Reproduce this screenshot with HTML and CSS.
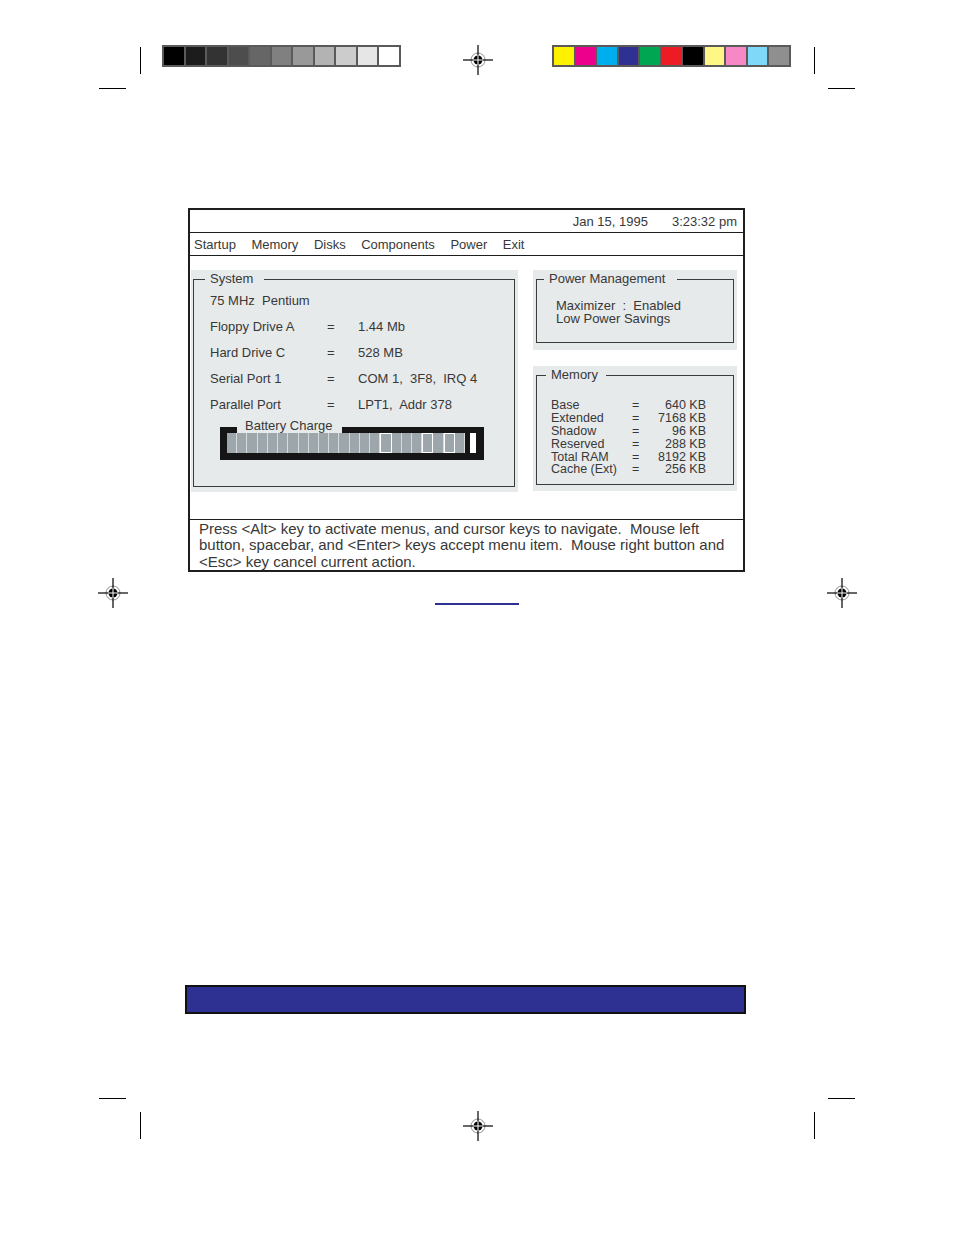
FILE: index.html
```html
<!DOCTYPE html>
<html>
<head>
<meta charset="utf-8">
<link rel="stylesheet" href="styles.css">
</head>
<body>
<div class="page">
  <div class="proofbar">
    <div class="strip">
      <span class="sw g0"></span><span class="sw g1"></span><span class="sw g2"></span><span class="sw g3"></span><span class="sw g4"></span><span class="sw g5"></span><span class="sw g6"></span><span class="sw g7"></span><span class="sw g8"></span><span class="sw g9"></span><span class="sw g10"></span>
    </div>
    <div class="strip">
      <span class="sw c0"></span><span class="sw c1"></span><span class="sw c2"></span><span class="sw c3"></span><span class="sw c4"></span><span class="sw c5"></span><span class="sw c6"></span><span class="sw c7"></span><span class="sw c8"></span><span class="sw c9"></span><span class="sw c10"></span>
    </div>
  </div>

  <div class="screen">
    <div class="titlebar"><span>Jan 15, 1995</span><span>3:23:32 pm</span></div>
    <div class="menubar">
      <span>Startup</span><span>Memory</span><span>Disks</span><span>Components</span><span>Power</span><span>Exit</span>
    </div>
    <div class="content">
      <div class="panel sys-panel">
        <div class="box sys-box">
          <span class="legend sys-legend">System</span>
          <div class="sys-rows">
            <div class="sys-full">75 MHz&nbsp; Pentium</div>
            <div>Floppy Drive A</div><div>=</div><div>1.44 Mb</div>
            <div>Hard Drive C</div><div>=</div><div>528 MB</div>
            <div>Serial Port 1</div><div>=</div><div>COM 1,&nbsp; 3F8,&nbsp; IRQ 4</div>
            <div>Parallel Port</div><div>=</div><div>LPT1,&nbsp; Addr 378</div>
          </div>
          <div class="battery">
            <span class="batt-label">Battery Charge</span>
            <div class="segs">
              <i class="seg"></i><i class="seg"></i><i class="seg"></i><i class="seg"></i><i class="seg"></i><i class="seg"></i><i class="seg"></i><i class="seg"></i><i class="seg"></i><i class="seg"></i><i class="seg"></i><i class="seg"></i><i class="seg"></i><i class="seg"></i><i class="seg"></i><i class="seg hl"></i><i class="seg"></i><i class="seg"></i><i class="seg"></i><i class="seg hl"></i><i class="seg"></i><i class="seg hl"></i><i class="seg"></i>
            </div>
            <i class="batt-tip"></i>
          </div>
        </div>
      </div>
      <div class="rightcol">
        <div class="panel pm-panel">
          <div class="box pm-box">
            <span class="legend pm-legend">Power Management</span>
            <div class="pm-lines">
              <div>Maximizer&nbsp; :&nbsp; Enabled</div>
              <div>Low Power Savings</div>
            </div>
          </div>
        </div>
        <div class="panel mem-panel">
          <div class="box mem-box">
            <span class="legend mem-legend">Memory</span>
            <div class="mem-rows">
              <div>Base</div><div>=</div><div class="num">640 KB</div>
              <div>Extended</div><div>=</div><div class="num">7168 KB</div>
              <div>Shadow</div><div>=</div><div class="num">96 KB</div>
              <div>Reserved</div><div>=</div><div class="num">288 KB</div>
              <div>Total RAM</div><div>=</div><div class="num">8192 KB</div>
              <div>Cache (Ext)</div><div>=</div><div class="num">256 KB</div>
            </div>
          </div>
        </div>
      </div>
    </div>
    <div class="footer">Press &lt;Alt&gt; key to activate menus, and cursor keys to navigate.&nbsp; Mouse left<br>button, spacebar, and &lt;Enter&gt; keys accept menu item.&nbsp; Mouse right button and<br>&lt;Esc&gt; key cancel current action.</div>
  </div>

  <div class="link-rule"></div>
  <div class="bluebar"></div>

  <!-- printer's crop marks -->
  <i class="crop v tl"></i><i class="crop h tlh"></i>
  <i class="crop v tr"></i><i class="crop h trh"></i>
  <i class="crop h blh"></i><i class="crop v bl"></i>
  <i class="crop h brh"></i><i class="crop v br"></i>

  <!-- registration marks -->
  <svg class="reg reg-top" viewBox="0 0 30 30" width="30" height="30"><circle cx="15" cy="15" r="7" fill="#fff" stroke="#777" stroke-width="0.8"/><line x1="0" y1="15" x2="30" y2="15" stroke="#000" stroke-width="1.2"/><line x1="15" y1="0" x2="15" y2="30" stroke="#000" stroke-width="1.2"/><circle cx="15" cy="15" r="4.5" fill="#000"/><line x1="10" y1="15" x2="20" y2="15" stroke="#fff" stroke-width="1"/><line x1="15" y1="10" x2="15" y2="20" stroke="#fff" stroke-width="1"/></svg>
  <svg class="reg reg-left" viewBox="0 0 30 30" width="30" height="30"><circle cx="15" cy="15" r="7" fill="#fff" stroke="#777" stroke-width="0.8"/><line x1="0" y1="15" x2="30" y2="15" stroke="#000" stroke-width="1.2"/><line x1="15" y1="0" x2="15" y2="30" stroke="#000" stroke-width="1.2"/><circle cx="15" cy="15" r="4.5" fill="#000"/><line x1="10" y1="15" x2="20" y2="15" stroke="#fff" stroke-width="1"/><line x1="15" y1="10" x2="15" y2="20" stroke="#fff" stroke-width="1"/></svg>
  <svg class="reg reg-right" viewBox="0 0 30 30" width="30" height="30"><circle cx="15" cy="15" r="7" fill="#fff" stroke="#777" stroke-width="0.8"/><line x1="0" y1="15" x2="30" y2="15" stroke="#000" stroke-width="1.2"/><line x1="15" y1="0" x2="15" y2="30" stroke="#000" stroke-width="1.2"/><circle cx="15" cy="15" r="4.5" fill="#000"/><line x1="10" y1="15" x2="20" y2="15" stroke="#fff" stroke-width="1"/><line x1="15" y1="10" x2="15" y2="20" stroke="#fff" stroke-width="1"/></svg>
  <svg class="reg reg-bottom" viewBox="0 0 30 30" width="30" height="30"><circle cx="15" cy="15" r="7" fill="#fff" stroke="#777" stroke-width="0.8"/><line x1="0" y1="15" x2="30" y2="15" stroke="#000" stroke-width="1.2"/><line x1="15" y1="0" x2="15" y2="30" stroke="#000" stroke-width="1.2"/><circle cx="15" cy="15" r="4.5" fill="#000"/><line x1="10" y1="15" x2="20" y2="15" stroke="#fff" stroke-width="1"/><line x1="15" y1="10" x2="15" y2="20" stroke="#fff" stroke-width="1"/></svg>
</div>
</body>
</html>
```
FILE: styles.css
```css
html, body {
  margin: 0;
  padding: 0;
  background: #fff;
}
.page {
  position: relative;
  width: 954px;
  height: 1235px;
  overflow: hidden;
  font-family: "Liberation Sans", Arial, sans-serif;
  color: #383838;
}

/* colour control strips */
.proofbar {
  display: flex;
  gap: 151px;
  padding: 45px 0 0 162px;
  height: 22px;
}
.strip {
  display: flex;
  gap: 2px;
  padding: 2px;
  width: 239px;
  height: 22px;
  box-sizing: border-box;
  background: #5a5a5a;
}
.sw { flex: 1; display: block; }
.g0 { background: #000; }
.g1 { background: #1c1c1c; }
.g2 { background: #333; }
.g3 { background: #4d4d4d; }
.g4 { background: #666; }
.g5 { background: #808080; }
.g6 { background: #999; }
.g7 { background: #b3b3b3; }
.g8 { background: #ccc; }
.g9 { background: #e6e6e6; }
.g10 { background: #fff; }
.c0 { background: #fff200; }
.c1 { background: #ec008c; }
.c2 { background: #00aeef; }
.c3 { background: #2e3192; }
.c4 { background: #00a651; }
.c5 { background: #ed1c24; }
.c6 { background: #000; }
.c7 { background: #fff685; }
.c8 { background: #f588c5; }
.c9 { background: #80d8f8; }
.c10 { background: #8f8f8f; }

/* the screen */
.screen {
  margin: 141px 0 0 188px;
  width: 557px;
  box-sizing: border-box;
  border: 2px solid #1e1e1e;
  font-size: 13px;
}
.titlebar {
  display: flex;
  justify-content: flex-end;
  align-items: center;
  gap: 24px;
  height: 22px;
  padding-right: 6px;
  border-bottom: 1px solid #1e1e1e;
}
.menubar {
  display: flex;
  align-items: center;
  gap: 15.5px;
  height: 22px;
  padding-left: 4px;
  border-bottom: 1px solid #1e1e1e;
}
.content {
  display: flex;
  gap: 15px;
  height: 264px;
  box-sizing: border-box;
  padding: 14px 0 0 1px;
  border-bottom: 1px solid #1e1e1e;
}
.panel {
  background: #e7eaeb;
  display: flow-root;
}
.box {
  position: relative;
  box-sizing: border-box;
  border: 1px solid #3c3c3c;
}
.legend {
  position: absolute;
  top: -9px;
  height: 16px;
  line-height: 16px;
  background: #e7eaeb;
  white-space: nowrap;
}

.sys-panel {
  width: 327px;
  height: 222px;
}
.sys-box {
  margin: 9px 3px 0 2px;
  height: 208px;
  padding: 7px 0 0 16px;
}
.sys-legend {
  left: 11px;
  padding: 0 11px 0 5px;
}
.sys-rows {
  display: grid;
  grid-template-columns: 117px 31px auto;
  grid-auto-rows: 26px;
  align-items: center;
}
.sys-full { grid-column: 1 / -1; }

.battery {
  position: relative;
  display: flex;
  gap: 5px;
  margin: 10px 0 0 10px;
  width: 264px;
  height: 33px;
  box-sizing: border-box;
  padding: 6px 8px 7px 7px;
  background: #151515;
}
.batt-label {
  position: absolute;
  top: -8px;
  left: 17px;
  height: 14px;
  line-height: 14px;
  padding: 0 10px 0 8px;
  background: #e7eaeb;
}
.segs {
  display: flex;
  width: 238px;
}
.seg {
  flex: 1;
  display: block;
  box-sizing: border-box;
  background: #9da7ab;
  border-right: 1px solid #d5dadc;
}
.seg.hl {
  border: 1px solid #fff;
}
.batt-tip {
  display: block;
  width: 6px;
  background: #fff;
}

.rightcol {
  display: flex;
  flex-direction: column;
  gap: 16px;
  width: 204px;
}
.pm-panel { height: 80px; }
.pm-box {
  margin: 9px 3px 0 3px;
  height: 64px;
  padding: 19px 0 0 19px;
  font-size: 13px;
  line-height: 13px;
}
.pm-legend {
  left: 7px;
  padding: 0 12px 0 5px;
  font-size: 13px;
}
.pm-lines div { white-space: nowrap; }

.mem-panel { height: 125px; }
.mem-box {
  margin: 9px 3px 0 3px;
  height: 110px;
  padding: 23px 0 0 14px;
  font-size: 12.5px;
}
.mem-legend {
  left: 9px;
  padding: 0 8px 0 5px;
  font-size: 13px;
}
.mem-rows {
  display: grid;
  grid-template-columns: 81px 12px 62px;
  grid-auto-rows: 12.9px;
  line-height: 12.9px;
}
.num { text-align: right; }

.footer {
  height: 50px;
  box-sizing: border-box;
  padding: 1px 0 0 9px;
  font-size: 15px;
  line-height: 16.3px;
  white-space: nowrap;
}

.link-rule {
  width: 84px;
  height: 2px;
  margin: 31px auto 0;
  background: #2e3192;
}
.bluebar {
  margin: 380px 0 0 185px;
  width: 561px;
  height: 29px;
  box-sizing: border-box;
  border: 2px solid #111;
  background: #2e3192;
}

/* printer's marks on the sheet */
.crop {
  position: absolute;
  display: block;
  background: #000;
}
.crop.v { width: 1px; height: 27px; }
.crop.h { width: 27px; height: 1px; }
.tl { left: 140px; top: 47px; }
.tr { left: 814px; top: 47px; }
.tlh { left: 99px; top: 88px; }
.trh { left: 828px; top: 88px; }
.blh { left: 99px; top: 1098px; }
.brh { left: 828px; top: 1098px; }
.bl { left: 140px; top: 1112px; }
.br { left: 814px; top: 1112px; }

.reg { position: absolute; }
.reg-top { left: 463px; top: 45px; }
.reg-left { left: 98px; top: 578px; }
.reg-right { left: 827px; top: 578px; }
.reg-bottom { left: 463px; top: 1111px; }
```
